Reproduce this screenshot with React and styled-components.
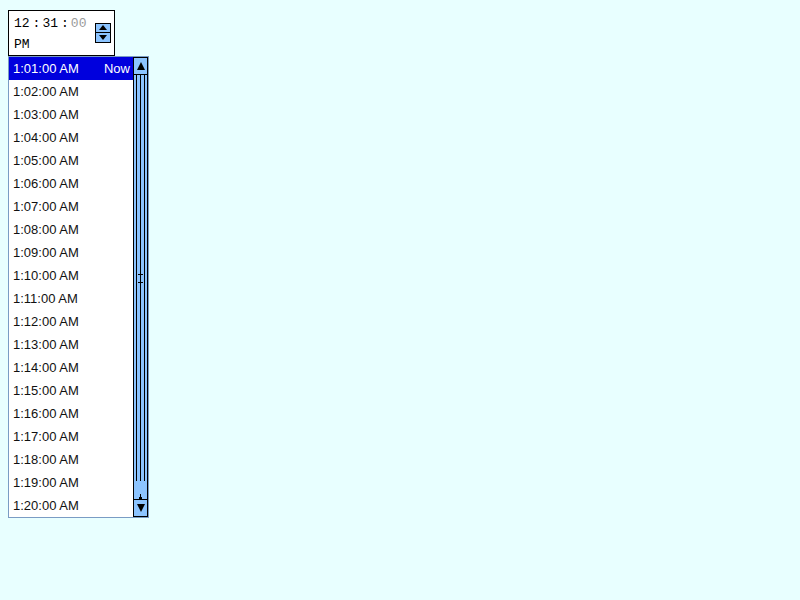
import React from "react";
import styled, { createGlobalStyle } from "styled-components";

const GlobalStyle = createGlobalStyle`
  html, body {
    margin: 0;
    padding: 0;
    background: #e8ffff;
  }
  body {
    font-family: "Liberation Sans", Arial, sans-serif;
  }
`;

const Page = styled.div`
  padding: 10px 0 0 8px;
  width: 800px;
  height: 600px;
  box-sizing: border-box;
`;

const TimeBox = styled.div`
  width: 107px;
  height: 46px;
  box-sizing: border-box;
  border: 1px solid #000;
  background: #fff;
  display: flex;
  justify-content: space-between;
  align-items: center;
  padding: 0 3px 0 5px;
`;

const Fields = styled.div`
  align-self: flex-start;
  padding-top: 3px;
  font-family: "Liberation Mono", "Courier New", monospace;
  font-size: 13px;
  line-height: 20px;
  color: #000;
`;

const FieldRow = styled.div`
  display: flex;
  margin-top: ${(p) => (p.$second ? "1px" : "0")};
`;

const Segment = styled.span`
  color: ${(p) => (p.$muted ? "#9a9a9a" : "#000")};
`;

const Colon = styled.span`
  margin: 0 2px 0 3px;
`;

const Spinner = styled.div`
  width: 16px;
  height: 20px;
  margin-bottom: 1px;
  box-sizing: border-box;
  border: 1px solid #000;
  background: #8cc4ff;
  display: flex;
  flex-direction: column;
`;

const SpinHalf = styled.div`
  flex: 1;
  display: flex;
  align-items: center;
  justify-content: center;
  border-top: ${(p) => (p.$lower ? "1px solid #000" : "none")};
`;

const Arrow = styled.div`
  width: 0;
  height: 0;
  border-left: ${(p) => p.$size}px solid transparent;
  border-right: ${(p) => p.$size}px solid transparent;
  ${(p) =>
    p.$down
      ? `border-top: ${p.$tall}px solid #000;`
      : `border-bottom: ${p.$tall}px solid #000;`}
`;

const List = styled.div`
  width: 141px;
  height: 462px;
  box-sizing: border-box;
  border: 1px solid #7a9cc4;
  background: #fff;
  display: flex;
`;

const Rows = styled.div`
  width: 124px;
  display: flex;
  flex-direction: column;
`;

const Row = styled.div`
  height: 23px;
  flex: none;
  display: flex;
  align-items: center;
  justify-content: space-between;
  padding: 0 3px 0 4px;
  box-sizing: border-box;
  font-size: 13px;
  color: ${(p) => (p.$active ? "#fff" : "#111")};
  background: ${(p) => (p.$active ? "#0000dd" : "transparent")};
`;

const ScrollBar = styled.div`
  width: 15px;
  box-sizing: border-box;
  border: 1px solid #000;
  background: #8cc4ff;
  display: flex;
  flex-direction: column;
`;

const ScrollButton = styled.div`
  height: 16px;
  flex: none;
  display: flex;
  align-items: center;
  justify-content: center;
  ${(p) => (p.$bottom ? "border-top: 1px solid #000;" : "border-bottom: 1px solid #000;")}
`;

const Track = styled.div`
  flex: 1;
  display: flex;
  flex-direction: column;
  align-items: center;
`;

const Thumb = styled.div`
  position: relative;
  width: 9px;
  height: 406px;
  box-sizing: border-box;
  border-left: 1px solid #000;
  border-right: 1px solid #000;
  display: flex;
  justify-content: center;
  align-items: center;
`;

const ThumbLine = styled.div`
  position: absolute;
  top: 0;
  bottom: 0;
  left: 3px;
  width: 1px;
  background: #000;
`;

const Grip = styled.div`
  position: relative;
  width: 5px;
  height: 7px;
  border-top: 1px solid #000;
  border-bottom: 1px solid #000;
`;

const Stub = styled.div`
  margin-top: auto;
  display: flex;
  flex-direction: column;
  align-items: center;
`;

const StubStem = styled.div`
  width: 1px;
  height: 3px;
  background: #000;
`;

const StubBase = styled.div`
  width: 3px;
  height: 2px;
  background: #000;
`;

const times = Array.from({ length: 20 }, (_, i) => {
  const m = String(i + 1).padStart(2, "0");
  return `1:${m}:00 AM`;
});

export default function App() {
  return (
    <>
      <GlobalStyle />
      <Page>
        <TimeBox>
          <Fields>
            <FieldRow>
              <Segment>12</Segment>
              <Colon>:</Colon>
              <Segment>31</Segment>
              <Colon>:</Colon>
              <Segment $muted>00</Segment>
            </FieldRow>
            <FieldRow $second>
              <Segment>PM</Segment>
            </FieldRow>
          </Fields>
          <Spinner>
            <SpinHalf>
              <Arrow $size={4} $tall={5} />
            </SpinHalf>
            <SpinHalf $lower>
              <Arrow $size={4} $tall={5} $down />
            </SpinHalf>
          </Spinner>
        </TimeBox>
        <List>
          <Rows>
            {times.map((t, i) => (
              <Row key={t} $active={i === 0}>
                <span>{t}</span>
                {i === 0 && <span>Now</span>}
              </Row>
            ))}
          </Rows>
          <ScrollBar>
            <ScrollButton>
              <Arrow $size={4} $tall={8} />
            </ScrollButton>
            <Track>
              <Thumb>
                <ThumbLine />
                <Grip />
              </Thumb>
              <Stub>
                <StubStem />
                <StubBase />
              </Stub>
            </Track>
            <ScrollButton $bottom>
              <Arrow $size={4} $tall={8} $down />
            </ScrollButton>
          </ScrollBar>
        </List>
      </Page>
    </>
  );
}
